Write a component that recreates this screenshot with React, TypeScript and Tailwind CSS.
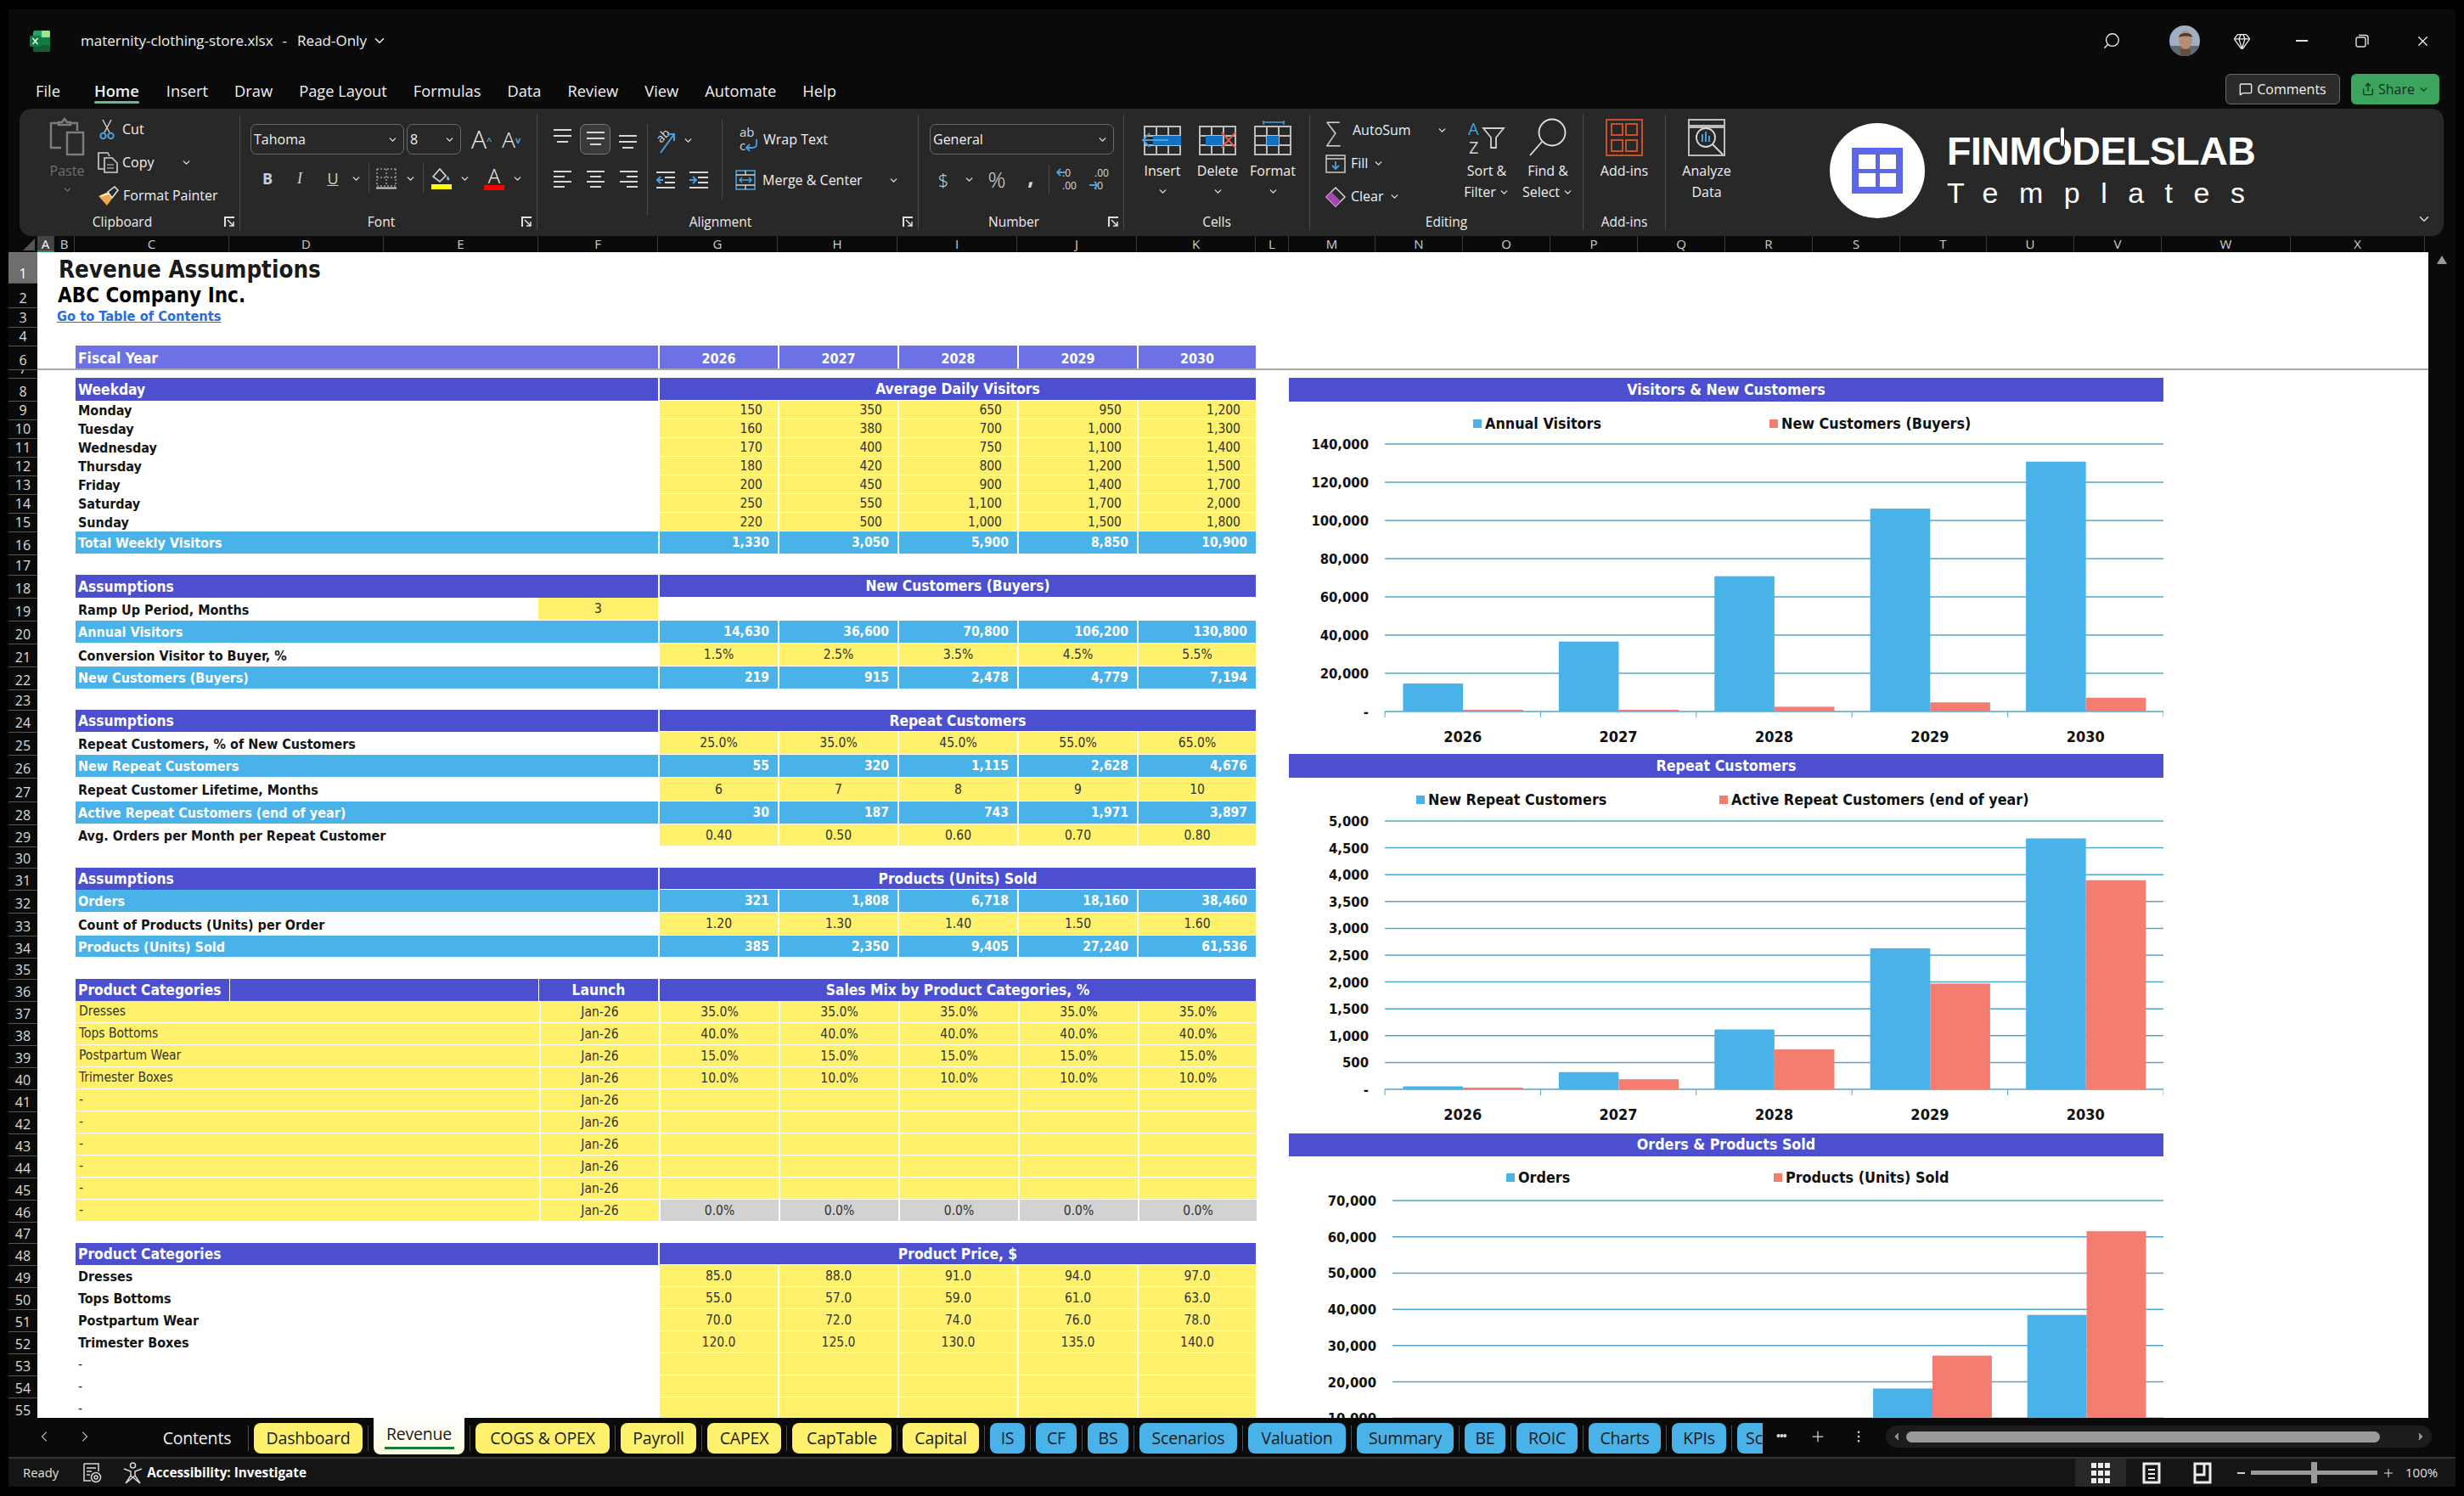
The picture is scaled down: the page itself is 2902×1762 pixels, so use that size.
import { ChevronDown, ChevronLeft, ChevronRight, Gem, MessageSquare, Plus, Search, Share, X, MoreVertical } from "lucide-react";

const Chev = ({ className = "" }: { className?: string }) => (
  <ChevronDown size={13} strokeWidth={2.5} className={`text-[#e0e0e0] shrink-0 ${className}`} />
);

/* ---------- ribbon icons ---------- */
const PasteIcon = () => (
  <svg width="42" height="46" viewBox="0 0 42 46" fill="none" stroke="#7d7d7d" strokeWidth="2.4">
    <path d="M14 36H2V7h9M25 7h8v9" />
    <path d="M11 9V6h4l3-4 3 4h4v3z" />
    <rect x="21" y="18" width="19" height="26" />
  </svg>
);
const CutIcon = () => (
  <svg width="18" height="25" viewBox="0 0 18 25" fill="none">
    <path d="M4 1l8 15M14 1L6 16" stroke="#d0d0d0" strokeWidth="1.5" />
    <circle cx="4.5" cy="20" r="3.2" stroke="#4a9fdc" strokeWidth="2" />
    <circle cx="13.5" cy="20" r="3.2" stroke="#4a9fdc" strokeWidth="2" />
  </svg>
);
const CopyIcon = () => (
  <svg width="24" height="25" viewBox="0 0 24 25" fill="none" stroke="#d0d0d0" strokeWidth="1.6">
    <path d="M7 20H1V1h11l2 4" />
    <path d="M8 7h9l6 6v11H8z" />
    <path d="M11 15h8M11 19h8" strokeWidth="1" />
  </svg>
);
const PainterIcon = () => (
  <svg width="25" height="24" viewBox="0 0 25 24" fill="none">
    <path d="M1 12l11-5 5 8-6 8z" fill="#f0a94a" />
    <path d="M4 12l9-3" stroke="#fff" strokeWidth="1.4" />
    <path d="M12 7l8-6 4 4-7 9z" stroke="#e6e6e6" strokeWidth="1.5" />
  </svg>
);
const Launcher = () => (
  <svg width="13" height="13" viewBox="0 0 13 13" fill="none" stroke="#e0e0e0" strokeWidth="1.5">
    <path d="M1 12V1h11" strokeWidth="2" />
    <path d="M4 4l7 7M11 6v5H6" />
  </svg>
);
const BordersIcon = () => (
  <svg width="24" height="25" viewBox="0 0 24 25" fill="none" stroke="#cfcfcf">
    <path d="M1 1h22M1 1v20M23 1v20M12 1v20M1 11h22M1 21h22" strokeDasharray="2 2" />
    <path d="M0 23.5h24" strokeWidth="2" />
  </svg>
);
const FillIcon = () => (
  <svg width="26" height="27" viewBox="0 0 26 27" fill="none">
    <path d="M3 11l8-9 7 8-7 7z" stroke="#d8d8d8" strokeWidth="1.6" />
    <path d="M20 10c2 2 3 4 2 5s-3 0-3-2z" fill="#7ab8e8" />
    <rect x="1" y="20" width="24" height="6" fill="#ffff00" />
  </svg>
);
const AlignLines = ({ kind }: { kind: string }) => {
  const rows: Record<string, [number, number, number][]> = {
    top: [[1, 1, 21], [1, 8, 21], [5, 15, 13]],
    mid: [[1, 4, 21], [1, 11, 21], [5, 18, 13]],
    bot: [[1, 8, 21], [1, 15, 21], [5, 22, 13]],
    l: [[1, 3, 21], [1, 9, 13], [1, 15, 21], [1, 21, 13]],
    c: [[1, 3, 21], [5, 9, 13], [1, 15, 21], [5, 21, 13]],
    r: [[1, 3, 21], [9, 9, 13], [1, 15, 21], [9, 21, 13]],
  };
  return (
    <svg width="23" height="25" viewBox="0 0 23 25" stroke="#d6d6d6" strokeWidth="2">
      {rows[kind].map(([x, y, w], i) => (
        <line key={i} x1={x} y1={y} x2={x + w} y2={y} />
      ))}
    </svg>
  );
};
const IndentIcon = ({ right = false }: { right?: boolean }) => (
  <svg width="24" height="24" viewBox="0 0 24 24" fill="none">
    <path d="M1 3h22M11 9h12M11 15h12M1 21h22" stroke="#d6d6d6" strokeWidth="2" />
    {right ? (
      <path d="M1 12h7M5 8l4 4-4 4" stroke="#4a9fdc" strokeWidth="2" />
    ) : (
      <path d="M9 12H2M6 8l-4 4 4 4" stroke="#4a9fdc" strokeWidth="2" />
    )}
  </svg>
);
const OrientIcon = () => (
  <svg width="26" height="32" viewBox="0 0 26 32" fill="none">
    <text x="0" y="16" fontSize="14" fill="#d8d8d8" transform="rotate(-45 8 10)">ab</text>
    <path d="M6 31L22 9M14 9h8v8" stroke="#4a9fdc" strokeWidth="2" />
  </svg>
);
const WrapIcon = () => (
  <svg width="22" height="32" viewBox="0 0 22 32" fill="none">
    <text x="1" y="13" fontSize="15" fill="#d8d8d8">ab</text>
    <text x="1" y="29" fontSize="15" fill="#d8d8d8">c</text>
    <path d="M21 16v6c0 3-2 4-5 4h-6M13 22l-4 4 4 4" stroke="#4a9fdc" strokeWidth="1.8" />
  </svg>
);
const MergeIcon = () => (
  <svg width="24" height="24" viewBox="0 0 24 24" fill="none">
    <rect x="1" y="1" width="22" height="22" stroke="#4a9fdc" strokeWidth="1.6" />
    <path d="M1 6h22M1 18h22M12 1v5M12 18v5" stroke="#d6d6d6" strokeWidth="1.4" />
    <path d="M5 12h14M8 9l-3 3 3 3M16 9l3 3-3 3" stroke="#4a9fdc" strokeWidth="1.6" />
  </svg>
);
const DecimalIcon = ({ more = false }: { more?: boolean }) => (
  <svg width="24" height="30" viewBox="0 0 24 30" fill="none">
    <text x="7" y="12" fontSize="12" fill="#d8d8d8">{more ? ".0" : ".00"}</text>
    <text x="7" y="27" fontSize="12" fill="#d8d8d8">{more ? ".00" : ".0"}</text>
    {more ? (
      <path d="M11 7H2M5 3L1 7l4 4" stroke="#4a9fdc" strokeWidth="1.8" />
    ) : (
      <path d="M1 22h9M7 18l4 4-4 4" stroke="#4a9fdc" strokeWidth="1.8" />
    )}
  </svg>
);
const CellGrid = ({ kind }: { kind: "insert" | "delete" | "format" }) => (
  <svg width="50" height="42" viewBox="0 0 50 42" fill="none">
    {kind === "format" && <path d="M10 1v5M34 1v5M10 3h24" stroke="#4a9fdc" strokeWidth="1.5" transform="translate(4 0)" />}
    <rect x="4" y="8" width="42" height="33" stroke="#bdbdbd" strokeWidth="2" />
    <path d="M18 8v33M32 8v33M4 19h42M4 30h42" stroke="#bdbdbd" strokeWidth="2" />
    {kind === "insert" && (
      <>
        <rect x="14" y="19" width="33" height="11" fill="#1273c5" />
        <path d="M32 24H2M10 16l-8 8 8 8" stroke="#4a9fdc" strokeWidth="2" />
      </>
    )}
    {kind === "delete" && (
      <>
        <rect x="11" y="19" width="20" height="11" fill="#1273c5" />
        <path d="M30 15l16 18M46 15L30 33" stroke="#e05a50" strokeWidth="2" />
      </>
    )}
    {kind === "format" && <rect x="18" y="19" width="14" height="11" fill="#1273c5" />}
  </svg>
);
const FillDown = () => (
  <svg width="24" height="22" viewBox="0 0 24 22" fill="none">
    <rect x="1" y="1" width="22" height="20" stroke="#c4c4c4" strokeWidth="1.6" />
    <path d="M1 5h22" stroke="#c4c4c4" strokeWidth="1.6" />
    <path d="M12 8v9M8 13l4 4 4-4" stroke="#4a9fdc" strokeWidth="1.8" />
  </svg>
);
const EraserIcon = () => (
  <svg width="24" height="24" viewBox="0 0 24 24" fill="none">
    <path d="M12 1l11 11-11 11L1 12z" stroke="#d8d8d8" strokeWidth="1.5" />
    <path d="M7 6l11 11-6 6L1 12z" fill="#a844b4" />
  </svg>
);
const SortIcon = () => (
  <svg width="44" height="42" viewBox="0 0 44 42" fill="none">
    <text x="0" y="18" fontSize="20" fill="#4a9fdc">A</text>
    <text x="1" y="40" fontSize="20" fill="#cfcfcf">Z</text>
    <path d="M18 10h24l-9 11v12h-6V21z" stroke="#cfcfcf" strokeWidth="1.8" />
  </svg>
);
const FindIcon = () => (
  <svg width="44" height="46" viewBox="0 0 44 46" fill="none" stroke="#e2e2e2" strokeWidth="1.8">
    <circle cx="27" cy="17" r="15.5" />
    <path d="M15 28L1 44" />
  </svg>
);
const AddinsIcon = () => (
  <svg width="44" height="44" viewBox="0 0 44 44" fill="none" stroke="#c8512c" strokeWidth="2">
    <rect x="1" y="1" width="42" height="42" />
    <rect x="7" y="6" width="13" height="13" />
    <rect x="24" y="6" width="13" height="13" />
    <rect x="7" y="25" width="13" height="13" />
    <rect x="24" y="25" width="13" height="13" />
  </svg>
);
const AnalyzeIcon = () => (
  <svg width="44" height="44" viewBox="0 0 44 44" fill="none">
    <rect x="1" y="1" width="42" height="42" stroke="#bdbdbd" strokeWidth="2" />
    <path d="M1 9h42" stroke="#bdbdbd" strokeWidth="4" />
    <circle cx="21" cy="22" r="11" stroke="#d8d8d8" strokeWidth="1.8" />
    <path d="M29 30l12 12" stroke="#d8d8d8" strokeWidth="2" />
    <path d="M17 18v9M21 15v12M25 20v7" stroke="#4a9fdc" strokeWidth="2" />
  </svg>
);
const ExcelLogo = () => (
  <svg width="24" height="25" viewBox="0 0 24 25">
    <rect x="4" y="0" width="20" height="25" rx="2.5" fill="#21a366" />
    <rect x="14" y="0" width="10" height="8" rx="1.5" fill="#a6e08f" />
    <rect x="4" y="8" width="20" height="9" fill="#107c41" />
    <rect x="4" y="17" width="20" height="8" rx="2" fill="#185c37" />
    <rect x="0" y="6" width="13" height="13" rx="1.5" fill="#107c41" />
    <path d="M3.5 9l6 7M9.5 9l-6 7" stroke="#fff" strokeWidth="1.4" />
  </svg>
);
const Avatar = () => (
  <svg width="36" height="36" viewBox="0 0 36 36">
    <clipPath id="av"><circle cx="18" cy="18" r="18" /></clipPath>
    <g clipPath="url(#av)">
      <rect width="36" height="36" fill="#9fb0c2" />
      <rect y="24" width="36" height="12" fill="#5d6a72" />
      <ellipse cx="19" cy="17" rx="8" ry="11" fill="#b88d76" />
      <path d="M11 14c0-6 16-7 16 0-4-2-12-2-16 0z" fill="#4b3a30" />
      <rect x="13" y="28" width="12" height="8" fill="#6a4c3c" />
    </g>
  </svg>
);

/* ---------- ribbon ---------- */
const Group = ({ w, label, launcher, children }: { w: string; label: string; launcher?: boolean; children: React.ReactNode }) => (
  <div className={`${w} shrink-0 h-full flex flex-col border-r border-[#4c4c4c]`}>
    <div className="flex-1 min-h-0">{children}</div>
    <div className={`relative h-[20px] pt-[2px] flex items-center justify-center text-[15.5px] text-[#ececec] leading-none ${launcher ? "pr-[17px]" : ""}`}>
      {label}
      {launcher && <span className="absolute right-[5px] top-[4px]"><Launcher /></span>}
    </div>
  </div>
);
const Big = ({ w, icon, lines, chev }: { w: string; icon: React.ReactNode; lines: string[]; chev?: boolean }) => (
  <div className={`${w} h-full flex flex-col items-center text-[16px] leading-[25px] text-[#f0f0f0]`}>
    <div className="h-[54px] flex items-center">{icon}</div>
    {lines.map((l, i) => <div key={l} className="flex items-center gap-[3px] whitespace-nowrap">{l}{chev && i === lines.length - 1 && lines.length > 1 && <Chev />}</div>)}
    {chev && lines.length === 1 && <Chev className="mt-[5px]" />}
  </div>
);

const Ribbon = () => (
  <div className="ml-[13px] mr-[14px] h-[150px] shrink-0 rounded-[14px] bg-[#282828] py-[7px] flex text-[16px] text-[#f0f0f0] relative">
    <Group w="w-[260px]" label="Clipboard" launcher>
      <div className="flex pl-[31px] pt-[3px]">
        <div className="w-[50px] flex flex-col items-center mr-[11px] text-[#6f6f6f] leading-[22px]">
          <PasteIcon />
          <span className="mt-[6px]">Paste</span>
          <ChevronDown size={13} strokeWidth={2.5} className="mt-[5px]" />
        </div>
        <div className="flex flex-col gap-[14px] mt-[2px] leading-[25px]">
          <div className="flex items-center gap-[9px] pl-[2px]"><CutIcon />Cut</div>
          <div className="flex items-center gap-[5px]"><CopyIcon />Copy<Chev className="ml-[26px]" /></div>
          <div className="flex items-center gap-[5px] whitespace-nowrap"><PainterIcon />Format Painter</div>
        </div>
      </div>
    </Group>
    <Group w="w-[350px]" label="Font" launcher>
      <div className="pt-[11px] pl-[12px]">
        <div className="flex items-center h-[36px]">
          <div className="w-[181px] h-full flex items-center justify-between px-[3px] pr-[6px] rounded-[7px] border border-[#6a6a6a]">Tahoma<Chev /></div>
          <div className="w-[64px] ml-[3px] h-full flex items-center justify-between px-[3px] pr-[6px] rounded-[7px] border border-[#6a6a6a]">8<Chev /></div>
          <span className="ml-[12px] text-[30px] font-light leading-none">A<sup className="text-[11px] text-[#4a9fdc] font-bold">^</sup></span>
          <span className="ml-[12px] text-[26px] font-light leading-none">A<sup className="text-[11px] text-[#4a9fdc] font-bold">v</sup></span>
        </div>
        <div className="flex items-center mt-[13px] h-[30px]">
          <span className="w-[28px] ml-[6px] text-center font-bold text-[18px] text-[#cfcfcf]">B</span>
          <span className="w-[28px] ml-[10px] text-center italic text-[18px] text-[#cfcfcf] font-['Liberation_Serif',serif]">I</span>
          <span className="w-[28px] ml-[11px] text-center underline text-[18px] text-[#cfcfcf]">U</span>
          <Chev className="ml-[7px]" />
          <div className="w-px h-[34px] bg-[#4c4c4c] mx-[8px]" />
          <BordersIcon />
          <Chev className="ml-[10px]" />
          <div className="w-px h-[34px] bg-[#4c4c4c] mx-[8px]" />
          <FillIcon />
          <Chev className="ml-[8px]" />
          <span className="ml-[16px] w-[24px] flex flex-col items-center text-[24px] leading-[20px] font-light">A<span className="block w-[24px] h-[6px] bg-[#ff0000] mt-[1px]" /></span>
          <Chev className="ml-[9px]" />
        </div>
      </div>
    </Group>
    <Group w="w-[449px]" label="Alignment" launcher>
      <div className="flex h-full">
        <div className="pl-[18px] w-[130px] border-r border-[#4c4c4c] h-[108px] mt-[11px]">
          <div className="flex items-center gap-[9px] h-[36px]">
            <AlignLines kind="top" />
            <div className="w-[36px] h-[36px] rounded-[7px] border border-[#777] bg-[#3a3a3a] flex items-center justify-center"><AlignLines kind="mid" /></div>
            <AlignLines kind="bot" />
          </div>
          <div className="flex items-center gap-[16px] mt-[17px]">
            <AlignLines kind="l" /><AlignLines kind="c" /><AlignLines kind="r" />
          </div>
        </div>
        <div className="w-[88px] pl-[9px] border-r border-[#4c4c4c] h-[94px] mt-[6px]">
          <div className="flex items-center gap-[6px] mt-[6px] h-[36px]"><OrientIcon /><Chev /></div>
          <div className="flex items-center gap-[15px] mt-[17px]"><IndentIcon /><IndentIcon right /></div>
        </div>
        <div className="pl-[15px] pt-[11px] leading-[26px]">
          <div className="flex items-center gap-[7px] h-[36px] pl-[4px] whitespace-nowrap"><WrapIcon />Wrap Text</div>
          <div className="flex items-center gap-[8px] mt-[17px] whitespace-nowrap"><MergeIcon />Merge &amp; Center<Chev className="ml-[22px]" /></div>
        </div>
      </div>
    </Group>
    <Group w="w-[242px]" label="Number" launcher>
      <div className="pl-[13px] pt-[11px]">
        <div className="w-[217px] h-[36px] rounded-[7px] border border-[#6a6a6a] flex items-center justify-between px-[3px] pr-[6px]">General<Chev /></div>
        <div className="flex items-center mt-[12px] h-[34px]">
          <span className="ml-[4px] w-[24px] text-center text-[22px] text-[#d8d8d8] font-light">$</span>
          <Chev className="ml-[12px]" />
          <span className="ml-[10px] w-[32px] text-center text-[26px] text-[#d8d8d8] font-light">%</span>
          <span className="ml-[16px] w-[16px] text-center text-[26px] text-[#d8d8d8] font-bold leading-none -mt-[6px]">,</span>
          <div className="w-px h-[34px] bg-[#4c4c4c] ml-[13px] mr-[8px] shrink-0" />
          <DecimalIcon more />
          <span className="w-[14px]" />
          <DecimalIcon />
        </div>
      </div>
    </Group>
    <Group w="w-[219px]" label="Cells">
      <div className="flex pl-[20px] gap-[15px]">
        <Big w="w-[50px]" icon={<CellGrid kind="insert" />} lines={["Insert"]} chev />
        <Big w="w-[50px]" icon={<CellGrid kind="delete" />} lines={["Delete"]} chev />
        <Big w="w-[50px]" icon={<CellGrid kind="format" />} lines={["Format"]} chev />
      </div>
    </Group>
    <Group w="w-[322px]" label="Editing">
      <div className="flex">
        <div className="w-[172px] pl-[18px] pt-[6px] flex flex-col gap-[14px] leading-[25px]">
          <div className="flex items-center gap-[8px]"><span className="w-[24px] text-[30px] leading-[25px] font-light text-[#cfcfcf]">∑</span>AutoSum<Chev className="ml-[22px]" /></div>
          <div className="flex items-center gap-[6px]"><FillDown />Fill<Chev /></div>
          <div className="flex items-center gap-[6px]"><EraserIcon />Clear<Chev /></div>
        </div>
        <Big w="w-[72px]" icon={<SortIcon />} lines={["Sort &", "Filter"]} chev />
        <Big w="w-[72px]" icon={<FindIcon />} lines={["Find &", "Select"]} chev />
      </div>
    </Group>
    <Group w="w-[97px]" label="Add-ins">
      <Big w="w-full" icon={<AddinsIcon />} lines={["Add-ins"]} />
    </Group>
    <div className="w-[96px] h-full shrink-0"><Big w="w-full" icon={<AnalyzeIcon />} lines={["Analyze", "Data"]} /></div>
    <div className="ml-[97px] flex items-center -mt-[4px]">
      <div className="w-[112px] h-[112px] rounded-full bg-white flex items-center justify-center">
        <div className="w-[60px] h-[54px] bg-[#5a67e8] grid grid-cols-2 gap-[5px] p-[8px]">
          <div className="bg-white" /><div className="bg-white" /><div className="bg-white" /><div className="bg-white" />
        </div>
      </div>
      <div className="ml-[26px] w-[362px] font-['Liberation_Sans',sans-serif] text-white">
        <div className="relative text-[46.5px] font-bold leading-[46px] tracking-[-0.5px] whitespace-nowrap">
          FINMODELSLAB
          <span className="absolute left-[133px] -top-[5px] w-[6px] h-[22px] rounded-full bg-white border-x border-[#282828]" />
        </div>
        <div className="text-[34px] font-light leading-[40px] mt-[6px] tracking-[24.5px] whitespace-nowrap">Templates</div>
      </div>
    </div>
    <ChevronDown size={18} className="absolute right-[14px] bottom-[11px] text-[#d8d8d8]" />
  </div>
);

/* ---------- sheet data ---------- */
type Row = {
  n: number;
  h: string;
  kind: "title" | "company" | "link" | "blank" | "years" | "head" | "launchHead" | "input" | "mid" | "total" | "ramp" | "mix" | "price";
  label?: string;
  merged?: string;
  vals?: string[];
  gray?: boolean;
};
const blank5 = ["", "", "", "", ""];
const mix = (n: number, label: string, vals: string[], gray = false): Row => ({ n, h: "h-[26px]", kind: "mix", label, vals, gray });
const price = (n: number, label: string, vals: string[]): Row => ({ n, h: "h-[26px]", kind: "price", label, vals });

const rows: Row[] = [
  { n: 1, h: "h-[36px]", kind: "title", label: "Revenue Assumptions" },
  { n: 2, h: "h-[29px]", kind: "company", label: "ABC Company Inc." },
  { n: 3, h: "h-[23px]", kind: "link", label: "Go to Table of Contents" },
  { n: 4, h: "h-[22px]", kind: "blank" },
  { n: 6, h: "h-[28px]", kind: "years", label: "Fiscal Year", vals: ["2026", "2027", "2028", "2029", "2030"] },
  { n: 7, h: "h-[10px]", kind: "blank" },
  { n: 8, h: "h-[27px]", kind: "head", label: "Weekday", merged: "Average Daily Visitors" },
  { n: 9, h: "h-[22px]", kind: "input", label: "Monday", vals: ["150", "350", "650", "950", "1,200"] },
  { n: 10, h: "h-[22px]", kind: "input", label: "Tuesday", vals: ["160", "380", "700", "1,000", "1,300"] },
  { n: 11, h: "h-[22px]", kind: "input", label: "Wednesday", vals: ["170", "400", "750", "1,100", "1,400"] },
  { n: 12, h: "h-[22px]", kind: "input", label: "Thursday", vals: ["180", "420", "800", "1,200", "1,500"] },
  { n: 13, h: "h-[22px]", kind: "input", label: "Friday", vals: ["200", "450", "900", "1,400", "1,700"] },
  { n: 14, h: "h-[22px]", kind: "input", label: "Saturday", vals: ["250", "550", "1,100", "1,700", "2,000"] },
  { n: 15, h: "h-[22px]", kind: "input", label: "Sunday", vals: ["220", "500", "1,000", "1,500", "1,800"] },
  { n: 16, h: "h-[27px]", kind: "total", label: "Total Weekly Visitors", vals: ["1,330", "3,050", "5,900", "8,850", "10,900"] },
  { n: 17, h: "h-[24px]", kind: "blank" },
  { n: 18, h: "h-[27px]", kind: "head", label: "Assumptions", merged: "New Customers (Buyers)" },
  { n: 19, h: "h-[27px]", kind: "ramp", label: "Ramp Up Period, Months" },
  { n: 20, h: "h-[27px]", kind: "total", label: "Annual Visitors", vals: ["14,630", "36,600", "70,800", "106,200", "130,800"] },
  { n: 21, h: "h-[27px]", kind: "mid", label: "Conversion Visitor to Buyer, %", vals: ["1.5%", "2.5%", "3.5%", "4.5%", "5.5%"] },
  { n: 22, h: "h-[27px]", kind: "total", label: "New Customers (Buyers)", vals: ["219", "915", "2,478", "4,779", "7,194"] },
  { n: 23, h: "h-[24px]", kind: "blank" },
  { n: 24, h: "h-[26px]", kind: "head", label: "Assumptions", merged: "Repeat Customers" },
  { n: 25, h: "h-[27px]", kind: "mid", label: "Repeat Customers, % of New Customers", vals: ["25.0%", "35.0%", "45.0%", "55.0%", "65.0%"] },
  { n: 26, h: "h-[27px]", kind: "total", label: "New Repeat Customers", vals: ["55", "320", "1,115", "2,628", "4,676"] },
  { n: 27, h: "h-[28px]", kind: "mid", label: "Repeat Customer Lifetime, Months", vals: ["6", "7", "8", "9", "10"] },
  { n: 28, h: "h-[27px]", kind: "total", label: "Active Repeat Customers (end of year)", vals: ["30", "187", "743", "1,971", "3,897"] },
  { n: 29, h: "h-[26px]", kind: "mid", label: "Avg. Orders per Month per Repeat Customer", vals: ["0.40", "0.50", "0.60", "0.70", "0.80"] },
  { n: 30, h: "h-[25px]", kind: "blank" },
  { n: 31, h: "h-[26px]", kind: "head", label: "Assumptions", merged: "Products (Units) Sold" },
  { n: 32, h: "h-[27px]", kind: "total", label: "Orders", vals: ["321", "1,808", "6,718", "18,160", "38,460"] },
  { n: 33, h: "h-[27px]", kind: "mid", label: "Count of Products (Units) per Order", vals: ["1.20", "1.30", "1.40", "1.50", "1.60"] },
  { n: 34, h: "h-[26px]", kind: "total", label: "Products (Units) Sold", vals: ["385", "2,350", "9,405", "27,240", "61,536"] },
  { n: 35, h: "h-[25px]", kind: "blank" },
  { n: 36, h: "h-[26px]", kind: "launchHead", label: "Product Categories", merged: "Sales Mix by Product Categories, %" },
  mix(37, "Dresses", ["35.0%", "35.0%", "35.0%", "35.0%", "35.0%"]),
  mix(38, "Tops Bottoms", ["40.0%", "40.0%", "40.0%", "40.0%", "40.0%"]),
  mix(39, "Postpartum Wear", ["15.0%", "15.0%", "15.0%", "15.0%", "15.0%"]),
  mix(40, "Trimester Boxes", ["10.0%", "10.0%", "10.0%", "10.0%", "10.0%"]),
  mix(41, "-", blank5),
  mix(42, "-", blank5),
  mix(43, "-", blank5),
  mix(44, "-", blank5),
  mix(45, "-", blank5),
  mix(46, "-", ["0.0%", "0.0%", "0.0%", "0.0%", "0.0%"], true),
  { n: 47, h: "h-[25px]", kind: "blank" },
  { n: 48, h: "h-[26px]", kind: "head", label: "Product Categories", merged: "Product Price, $" },
  price(49, "Dresses", ["85.0", "88.0", "91.0", "94.0", "97.0"]),
  price(50, "Tops Bottoms", ["55.0", "57.0", "59.0", "61.0", "63.0"]),
  price(51, "Postpartum Wear", ["70.0", "72.0", "74.0", "76.0", "78.0"]),
  price(52, "Trimester Boxes", ["120.0", "125.0", "130.0", "135.0", "140.0"]),
  price(53, "-", blank5),
  price(54, "-", blank5),
  price(55, "-", blank5),
];

const colWidth = ["w-[141px]", "w-[141px]", "w-[141px]", "w-[141px]", "w-[140px]"];

const Vals = ({ vals, cls }: { vals: string[]; cls: string }) => (
  <>
    {vals.map((v, i) => (
      <div key={i} className={`${colWidth[i]} h-full flex items-center pt-[2px] shrink-0 box-border border-l-2 border-b border-white ${cls}`}>{v}</div>
    ))}
  </>
);

const SheetRow = ({ row }: { row: Row }) => {
  const { kind, label, merged, vals = blank5 } = row;
  const base = `${row.h} flex shrink-0 pl-[45px] text-[15.5px] leading-none text-[#141414] whitespace-nowrap`;
  const tall = "w-[686px] h-full flex items-center pl-[3px] pt-[2px] box-border";
  if (kind === "title")
    return <div className={`${row.h} shrink-0 pl-[25px] flex items-end text-[27.5px] font-bold text-[#1a1a1a] leading-[31px]`}>{label}</div>;
  if (kind === "company")
    return <div className={`${row.h} shrink-0 pl-[24px] flex items-end text-[24px] font-bold text-black leading-[27px]`}>{label}</div>;
  if (kind === "link")
    return <div className={`${row.h} shrink-0 pl-[23px] flex items-center text-[16.3px] font-bold text-[#2a6be0] underline`}>{label}</div>;
  if (kind === "blank") return <div className={base} />;
  if (kind === "years")
    return (
      <div className={`${base} font-bold text-white`}>
        <div className={`${tall} bg-[#6c72e6] text-[17.3px] pt-[4px]`}>{label}</div>
        <Vals vals={vals} cls="justify-center bg-[#6c72e6] text-[16px] pt-[4px]" />
      </div>
    );
  if (kind === "head")
    return (
      <div className={`${base} font-bold text-white`}>
        <div className={`${tall} bg-[#4b4fd0] text-[17.3px]`}>{label}</div>
        <div className="w-[704px] h-full flex items-center justify-center pt-[2px] bg-[#4b4fd0] border-l-2 border-b border-white box-border text-[17.3px]">{merged}</div>
      </div>
    );
  if (kind === "launchHead")
    return (
      <div className={`${base} font-bold text-white`}>
        <div className="w-[181px] h-full flex items-center pl-[3px] pt-[2px] bg-[#4b4fd0] text-[17.3px]">{label}</div>
        <div className="w-[364px] h-full bg-[#4b4fd0] border-l border-white" />
        <div className="w-[141px] h-full flex items-center justify-center pt-[2px] bg-[#4b4fd0] border-l border-white text-[17.3px]">Launch</div>
        <div className="w-[704px] h-full flex items-center justify-center pt-[2px] bg-[#4b4fd0] border-l-2 border-white text-[17.3px]">{merged}</div>
      </div>
    );
  if (kind === "input")
    return (
      <div className={base}>
        <div className={`${tall} font-bold text-[16px]`}>{label}</div>
        <Vals vals={vals} cls="justify-end pr-[18px] bg-[#fff16b] text-[#333]" />
      </div>
    );
  if (kind === "mid")
    return (
      <div className={base}>
        <div className={`${tall} font-bold text-[16px]`}>{label}</div>
        <Vals vals={vals} cls="justify-center bg-[#fff16b] text-[#333]" />
      </div>
    );
  if (kind === "total")
    return (
      <div className={`${base} font-bold text-white`}>
        <div className={`${tall} bg-[#49b2e8] border-b border-white text-[16px]`}>{label}</div>
        <Vals vals={vals} cls="justify-end pr-[10px] bg-[#49b2e8]" />
      </div>
    );
  if (kind === "ramp")
    return (
      <div className={base}>
        <div className="w-[545px] h-full flex items-center pl-[3px] pt-[2px] font-bold text-[16px]">{label}</div>
        <div className="w-[141px] h-full flex items-center justify-center pt-[2px] bg-[#fff16b] text-[#333] border-b border-white">3</div>
      </div>
    );
  if (kind === "mix")
    return (
      <div className={`${base} pl-[44px]`}>
        <div className="w-[546px] h-full flex items-center pl-[4px] bg-[#fff16b] text-[#333] border-b border-white box-border">{label}</div>
        <div className="w-[141px] h-full flex items-center justify-center pt-[2px] bg-[#fff16b] text-[#333] border-l-2 border-b border-white box-border">Jan-26</div>
        <Vals vals={vals} cls={`justify-center text-[#333] ${row.gray ? "bg-[#d2d2d2]" : "bg-[#fff16b]"}`} />
      </div>
    );
  return (
    <div className={base}>
      <div className={`${tall} ${label === "-" ? "" : "font-bold text-[16px]"}`}>{label}</div>
      <Vals vals={vals} cls="justify-center bg-[#fff16b] text-[#333]" />
    </div>
  );
};

/* ---------- charts ---------- */
type ChartProps = {
  h: string;
  svgH: number;
  left: number;
  yTop: number;
  y0: number;
  max: number;
  step: number;
  labelX: number;
  yearY: number;
  legendY: number;
  legend: [number, string, number, string];
  a: number[];
  b: number[];
};
const Chart = ({ h, svgH, left, yTop, y0, max, step, labelX, yearY, legendY, legend, a, b }: ChartProps) => {
  const right = 1030;
  const cat = (right - left) / 5;
  const bw = cat * 0.385;
  const off = cat * 0.117;
  const yOf = (v: number) => y0 - ((y0 - yTop) * v) / max;
  const barH = (v: number) => Math.max(y0 - yOf(v), 2);
  const ticks: number[] = [];
  for (let v = 0; v <= max; v += step) ticks.push(v);
  return (
    <svg width="1030" height={svgH} viewBox={`0 0 1030 ${svgH}`} className={`${h} block shrink-0`} fontWeight="700" fontSize="16.5" fill="#111" fontFamily="'DejaVu Sans Condensed','DejaVu Sans',sans-serif">
      {ticks.map((v) => (
        <g key={v}>
          <line x1={left} x2={right} y1={yOf(v)} y2={yOf(v)} stroke="#4ea6cc" strokeWidth="1.5" />
          <text x={labelX} y={yOf(v) + 6} textAnchor="end">{v === 0 ? "-" : v.toLocaleString("en-US")}</text>
        </g>
      ))}
      {[0, 1, 2, 3, 4, 5].map((i) => (
        <line key={i} x1={left + i * cat} x2={left + i * cat} y1={y0} y2={y0 + 7} stroke="#4ea6cc" strokeWidth="1" />
      ))}
      {a.map((v, i) => (
        <g key={i}>
          <rect x={left + i * cat + off} y={y0 - barH(v)} width={bw} height={barH(v)} fill="#49b2e8" />
          <rect x={left + i * cat + off + bw} y={y0 - barH(b[i])} width={bw} height={barH(b[i])} fill="#f47c70" />
          <text x={left + i * cat + cat / 2} y={yearY} textAnchor="middle" fontSize="18">{2026 + i}</text>
        </g>
      ))}
      <rect x={legend[0]} y={legendY - 5} width="10" height="10" fill="#49b2e8" />
      <text x={legend[0] + 14} y={legendY + 6} fontSize="17.8">{legend[1]}</text>
      <rect x={legend[2]} y={legendY - 5} width="10" height="10" fill="#f47c70" />
      <text x={legend[2] + 14} y={legendY + 6} fontSize="17.8">{legend[3]}</text>
    </svg>
  );
};
const ChartTitle = ({ h, children }: { h: string; children: React.ReactNode }) => (
  <div className={`${h} shrink-0 bg-[#4b4fd0] text-white font-bold text-[17.7px] flex items-center justify-center`}>{children}</div>
);

/* ---------- frame ---------- */
const columns: [string, string][] = [
  ["A", "w-[20px]"], ["B", "w-[24px]"], ["C", "w-[182px]"], ["D", "w-[182px]"], ["E", "w-[182px]"], ["F", "w-[141px]"],
  ["G", "w-[141px]"], ["H", "w-[141px]"], ["I", "w-[141px]"], ["J", "w-[141px]"], ["K", "w-[140px]"], ["L", "w-[39px]"],
  ["M", "w-[102px]"], ["N", "w-[103px]"], ["O", "w-[103px]"], ["P", "w-[103px]"], ["Q", "w-[103px]"], ["R", "w-[103px]"],
  ["S", "w-[103px]"], ["T", "w-[102px]"], ["U", "w-[103px]"], ["V", "w-[103px]"], ["W", "w-[152px]"], ["X", "w-[158px]"],
];
const menu = ["Insert", "Draw", "Page Layout", "Formulas", "Data", "Review", "View", "Automate", "Help"];
type Tab = { t: string; w: string; bg: string };
const yellow = "bg-[#fff16b]";
const blue = "bg-[#49b2e8]";
const tabsA: Tab[] = [{ t: "Dashboard", w: "w-[128px]", bg: yellow }];
const tabsB: Tab[] = [
  { t: "COGS & OPEX", w: "w-[158px]", bg: yellow },
  { t: "Payroll", w: "w-[89px]", bg: yellow },
  { t: "CAPEX", w: "w-[87px]", bg: yellow },
  { t: "CapTable", w: "w-[117px]", bg: yellow },
  { t: "Capital", w: "w-[90px]", bg: yellow },
  { t: "IS", w: "w-[41px]", bg: blue },
  { t: "CF", w: "w-[48px]", bg: blue },
  { t: "BS", w: "w-[48px]", bg: blue },
  { t: "Scenarios", w: "w-[115px]", bg: blue },
  { t: "Valuation", w: "w-[115px]", bg: blue },
  { t: "Summary", w: "w-[114px]", bg: blue },
  { t: "BE", w: "w-[48px]", bg: blue },
  { t: "ROIC", w: "w-[72px]", bg: blue },
  { t: "Charts", w: "w-[85px]", bg: blue },
  { t: "KPIs", w: "w-[64px]", bg: blue },
];
const Sep = () => <div className="w-px h-[30px] mt-[9px] mx-[6px] bg-[#4a4a4a] shrink-0" />;
const SheetTab = ({ tab }: { tab: Tab }) => (
  <>
    <div className={`${tab.w} ${tab.bg} h-[36px] mt-[6px] shrink-0 rounded-[8px] flex items-center justify-center text-[19.5px] tracking-[-0.2px] text-[#1c1c1c] whitespace-nowrap`}>{tab.t}</div>
    <Sep />
  </>
);

export default function App() {
  return (
    <div className="w-[2902px] h-[1762px] overflow-hidden bg-black px-[10px] py-[11px] font-['Open_Sans',sans-serif]">
      <div className="flex h-full flex-col bg-[#0a0a0a]">
        {/* Title bar */}
        <div className="h-[74px] shrink-0 flex items-center pl-[25px] text-[#f0f0f0] text-[17px]">
          <ExcelLogo />
          <span className="ml-[36px] whitespace-nowrap">maternity-clothing-store.xlsx</span>
          <span className="ml-[11px]">-</span>
          <span className="ml-[12px] whitespace-nowrap">Read-Only</span>
          <ChevronDown size={18} className="ml-[6px]" />
          <div className="ml-auto flex items-center">
            <Search size={22} strokeWidth={1.5} className="-scale-x-100" />
            <div className="ml-[57px]"><Avatar /></div>
            <Gem size={21} strokeWidth={1.5} className="ml-[39px]" />
            <span className="ml-[53px] w-[14px] h-[2px] bg-[#e0e0e0]" />
            <svg width="16" height="16" viewBox="0 0 16 16" fill="none" stroke="#e0e0e0" strokeWidth="1.4" className="ml-[56px]">
              <rect x="1" y="4" width="11" height="11" rx="2" />
              <path d="M4 1.5h8a3 3 0 013 3v8" />
            </svg>
            <X size={19} strokeWidth={1.5} className="ml-[54px] mr-[29px]" />
          </div>
        </div>
        {/* Menu */}
        <div className="h-[43px] shrink-0 flex items-start pt-[9px] pl-[32px] pr-[19px] text-[18.3px] text-[#f0f0f0] leading-[26px]">
          <span className="mr-[40px]">File</span>
          <span className="relative mr-[32px] font-semibold">
            Home
            <span className="absolute left-0 right-0 top-[25px] h-[3px] bg-[#66b98f] rounded" />
          </span>
          <div className="flex gap-[31px]">{menu.map((m) => <span key={m} className="whitespace-nowrap">{m}</span>)}</div>
          <div className="ml-auto -mt-[7px] flex items-center gap-[13px] text-[16px]">
            <div className="w-[135px] h-[36px] rounded-[6px] bg-[#2b2b2b] border border-[#6a6a6a] flex items-center justify-center gap-[5px]"><MessageSquare size={16} />Comments</div>
            <div className="w-[104px] h-[36px] rounded-[6px] bg-[#3ba55d] text-[#10331d] flex items-center justify-center gap-[4px]"><Share size={16} />Share<ChevronDown size={13} strokeWidth={2.5} /></div>
          </div>
        </div>
        <Ribbon />
        {/* Column headers */}
        <div className="h-[19px] shrink-0 flex text-[15px] text-[#d0d0d0] leading-[19px]">
          <div className="w-[34px] flex items-end justify-end pr-[3px] pb-[2px]">
            <div className="w-0 h-0 border-l-[14px] border-l-transparent border-b-[14px] border-b-[#555]" />
          </div>
          {columns.map(([c, w], i) => (
            <div key={c} className={`${w} shrink-0 text-center border-r border-[#3a3a3a] ${i === 0 ? "bg-[#444] border-b-2 border-b-[#2e8b57] text-white" : ""}`}>{c}</div>
          ))}
        </div>
        {/* Sheet */}
        <div className="h-[1373px] shrink-0 flex overflow-hidden">
          <div className="w-[34px] shrink-0 flex flex-col border-t border-[#777]">
            {rows.map((r) => (
              <div key={r.n} className={`${r.h} shrink-0 flex items-end justify-center border-b border-[#555] text-[16px] leading-[21px] overflow-hidden box-border ${r.n === 1 ? "bg-[#6e6e6e] text-white" : "text-[#dcdcdc]"}`}>{r.n}</div>
            ))}
          </div>
          <div className="relative w-[2816px] shrink-0 bg-white flex font-['DejaVu_Sans_Condensed','DejaVu_Sans',sans-serif] overflow-hidden">
            <div className="w-[1474px] shrink-0 flex flex-col">
              {rows.map((r) => <SheetRow key={r.n} row={r} />)}
            </div>
            <div className="w-[1030px] shrink-0 flex flex-col pt-[148px]">
              <ChartTitle h="h-[28px]">Visitors &amp; New Customers</ChartTitle>
              <Chart h="h-[415px]" svgH={415} left={113} yTop={50} y0={365} max={140000} step={20000} labelX={94} yearY={401} legendY={26}
                legend={[217, "Annual Visitors", 566, "New Customers (Buyers)"]}
                a={[14630, 36600, 70800, 106200, 130800]} b={[219, 915, 2478, 4779, 7194]} />
              <ChartTitle h="h-[28px]">Repeat Customers</ChartTitle>
              <Chart h="h-[419px]" svgH={419} left={113} yTop={51} y0={367} max={5000} step={500} labelX={94} yearY={403} legendY={26}
                legend={[150, "New Repeat Customers", 507, "Active Repeat Customers (end of year)"]}
                a={[55, 320, 1115, 2628, 4676]} b={[30, 187, 743, 1971, 3897]} />
              <ChartTitle h="h-[27px]">Orders &amp; Products Sold</ChartTitle>
              <Chart h="h-[400px]" svgH={400} left={122} yTop={52} y0={351} max={70000} step={10000} labelX={103} yearY={388} legendY={25}
                legend={[256, "Orders", 571, "Products (Units) Sold"]}
                a={[321, 1808, 6718, 18160, 38460]} b={[385, 2350, 9405, 27240, 61536]} />
            </div>
            {/* freeze pane line */}
            <div className="absolute left-0 right-0 top-[137px] h-[2px] bg-[#a8a8a8]" />
          </div>
          <div className="flex-1 flex justify-center pt-[4px]">
            <div className="w-0 h-0 border-x-[6px] border-x-transparent border-b-[10px] border-b-[#9a9a9a]" />
          </div>
        </div>
        {/* Sheet tabs */}
        <div className="h-[48px] shrink-0 flex border-b-2 border-[#333] overflow-hidden">
          <div className="w-[168px] shrink-0 flex items-center pl-[32px] gap-[28px] text-[#aaa] pb-[2px]">
            <ChevronLeft size={20} strokeWidth={1.5} />
            <ChevronRight size={20} strokeWidth={1.5} />
          </div>
          <div className="w-[108px] shrink-0 h-[36px] mt-[6px] flex items-center justify-center text-[19.5px] tracking-[-0.2px] text-[#f0f0f0]">Contents</div>
          <Sep />
          {tabsA.map((t) => <SheetTab key={t.t} tab={t} />)}
          <div className="w-[107px] h-[43px] shrink-0 rounded-b-[8px] bg-gradient-to-b from-white to-[#fffbdc] flex flex-col items-center pt-[7px] text-[19.5px] tracking-[-0.2px] text-[#1c1c1c] leading-[24px]">
            Revenue
            <span className="w-[82px] h-[3px] bg-[#107c41] mt-[3px]" />
          </div>
          <Sep />
          {tabsB.map((t) => <SheetTab key={t.t} tab={t} />)}
          <div className="w-[30px] h-[36px] mt-[6px] shrink-0 rounded-l-[8px] bg-[#49b2e8] overflow-hidden pl-[10px] flex items-center text-[19.5px] text-[#1c1c1c]">Sc</div>
          <div className="w-[145px] shrink-0 flex items-center text-[#d8d8d8] pb-[2px]">
            <span className="ml-[16px] text-[13px] font-bold tracking-[-1px]">•••</span>
            <Plus size={20} strokeWidth={1.5} className="ml-[27px]" />
            <MoreVertical size={18} strokeWidth={1.5} className="ml-[29px]" />
          </div>
          <div className="w-[643px] h-[26px] mt-[9px] shrink-0 rounded-full bg-[#1c1c1c] flex items-center px-[6px] text-[#999]">
            <ChevronLeft size={14} fill="#999" />
            <div className="ml-[4px] w-[563px] h-[13px] rounded-full bg-[#999]" />
            <ChevronRight size={14} fill="#999" className="ml-[41px]" />
          </div>
        </div>
        {/* Status bar */}
        <div className="flex-1 bg-[#151515] flex items-center pl-[17px] text-[14.8px] text-[#e0e0e0]">
          <span>Ready</span>
          <svg width="23" height="24" viewBox="0 0 23 24" fill="none" stroke="#d8d8d8" strokeWidth="1.5" className="ml-[28px]">
            <path d="M2 1h17v9M2 1v20h8M5 6h11M5 10h6M5 14h4" />
            <circle cx="16" cy="17" r="5.5" />
            <circle cx="16" cy="17" r="2" />
          </svg>
          <svg width="23" height="26" viewBox="0 0 23 26" fill="none" stroke="#d8d8d8" strokeWidth="1.5" className="ml-[25px]">
            <circle cx="11.5" cy="4" r="3" />
            <path d="M1 8l8 3v5l-6 9M22 8l-8 3v5l6 9M9 16l11 9M14 16L3 25" />
          </svg>
          <span className="ml-[5px] font-bold text-[15.3px] text-white whitespace-nowrap">Accessibility: Investigate</span>
          <div className="ml-auto flex items-center h-full pr-[4px]">
            <div className="w-[60px] h-full bg-[#282828] flex items-center justify-center">
              <svg width="22" height="24" viewBox="0 0 22 24" fill="#ececec"><path d="M0 0h6v6H0zM8 0h6v6H8zM16 0h6v6h-6zM0 9h6v6H0zM8 9h6v6H8zM16 9h6v6h-6zM0 18h6v6H0zM8 18h6v6H8zM16 18h6v6h-6z" /></svg>
            </div>
            <svg width="22" height="26" viewBox="0 0 22 26" fill="none" stroke="#ececec" strokeWidth="3" className="ml-[19px]"><rect x="2" y="2" width="18" height="22" /><path d="M7 9h8M7 14h8M7 19h8" strokeWidth="2" /></svg>
            <svg width="22" height="26" viewBox="0 0 22 26" fill="none" stroke="#ececec" strokeWidth="3" className="ml-[38px]"><path d="M2 24V2h18v22zM13 2v13H2" /></svg>
            <span className="ml-[30px] w-[9px] h-[2px] bg-[#d0d0d0]" />
            <div className="ml-[7px] relative w-[149px] h-[5px] bg-[#9a9a9a]">
              <span className="absolute left-[71px] -top-[10px] w-[7px] h-[25px] bg-[#9a9a9a]" />
            </div>
            <Plus size={16} strokeWidth={1.5} className="ml-[5px]" />
            <span className="ml-[12px] w-[55px] text-[15px]">100%</span>
          </div>
        </div>
      </div>
    </div>
  );
}
